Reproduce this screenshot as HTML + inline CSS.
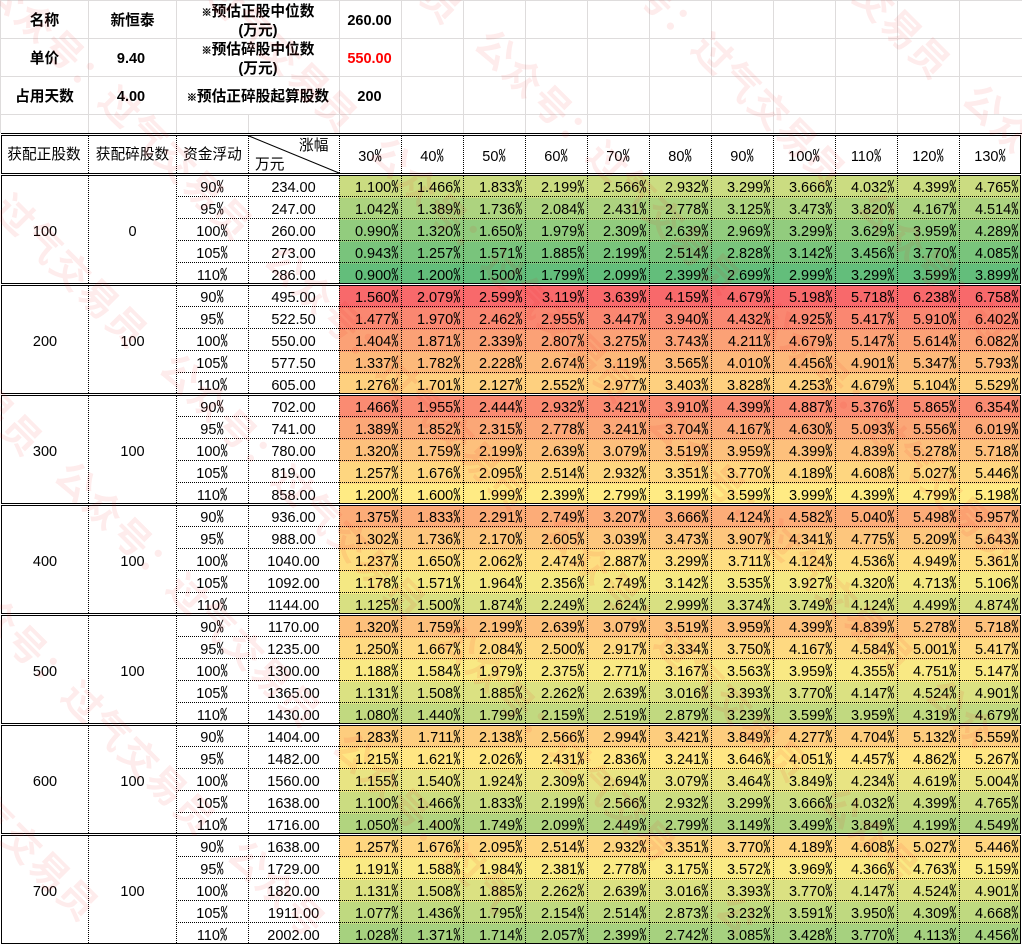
<!DOCTYPE html>
<html lang="zh"><head><meta charset="utf-8"><title>新恒泰</title>
<style>
html,body{margin:0;padding:0;background:#fff}
html{width:1022px;height:945px;overflow:hidden}
body{position:relative;width:1022px;height:945px;overflow:hidden;font:14.5px/22px "Liberation Sans","Noto Sans CJK SC",sans-serif;color:#000}
i{font-style:normal;font-family:IPAGothic,"Liberation Sans",sans-serif}
.t{position:absolute;text-align:center;white-space:nowrap}
.z{font-size:14.7px}
.w{font-weight:700;color:#000}
.k{font-size:10px;font-family:"Noto Sans CJK SC",sans-serif;font-weight:700;-webkit-text-stroke:.5px #000}
.g{position:absolute;left:2px;width:1018px;height:107px;overflow:hidden;padding:0}
.a,.b{position:absolute;top:0;height:107px;line-height:112px;text-align:center}
.a{left:0;width:86px}.b{left:87px;width:87px}
.r{position:relative;left:174px;width:844px;height:22px;display:flex;line-height:22px}
.r span{display:block;flex:none;text-align:center;white-space:nowrap}
.r span:nth-child(1){width:72px}
.r span:nth-child(2){width:91px;padding-top:1px;height:21px}
.r span:nth-child(n+3){width:59.5px;padding-right:2.5px;text-align:right;background:var(--c)}
svg{position:absolute;left:0;top:0}
.wm text{font:700 38px "Noto Sans CJK SC",sans-serif;letter-spacing:1.6px;fill:rgba(240,30,30,.085)}
</style></head><body>

<div class="t z w" style="left:1px;top:10px;width:87px">名称</div>
<div class="t z w" style="left:89px;top:10px;width:87px">新恒泰</div>
<div class="t z w" style="left:177px;top:1px;width:162px"><span class="k">※</span>预估正股中位数</div>
<div class="t z w" style="left:177px;top:20px;width:162px">(万元)</div>
<div class="t w" style="left:339px;top:10px;width:61px">260.00</div>
<div class="t z w" style="left:1px;top:48px;width:87px">单价</div>
<div class="t w" style="left:89px;top:48px;width:84px">9.40</div>
<div class="t z w" style="left:177px;top:39px;width:162px"><span class="k">※</span>预估碎股中位数</div>
<div class="t z w" style="left:177px;top:58px;width:162px">(万元)</div>
<div class="t w" style="left:339px;top:48px;width:61px;color:#f00">550.00</div>
<div class="t z w" style="left:1px;top:86px;width:87px">占用天数</div>
<div class="t w" style="left:89px;top:86px;width:84px">4.00</div>
<div class="t z w" style="left:177px;top:86px;width:162px"><span class="k">※</span>预估正碎股起算股数</div>
<div class="t w" style="left:339px;top:86px;width:61px">200</div>

<div class="t z" style="left:1px;top:144px;width:86px">获配正股数</div>
<div class="t z" style="left:89px;top:144px;width:87px">获配碎股数</div>
<div class="t z" style="left:177px;top:144px;width:71px">资金浮动</div>
<div class="t z" style="left:299px;top:135px">涨幅</div>
<div class="t z" style="left:255px;top:154px">万元</div>
<div class="t" style="left:339px;top:145px;width:62px">30<i>%</i></div>
<div class="t" style="left:401px;top:145px;width:62px">40<i>%</i></div>
<div class="t" style="left:463px;top:145px;width:62px">50<i>%</i></div>
<div class="t" style="left:525px;top:145px;width:62px">60<i>%</i></div>
<div class="t" style="left:587px;top:145px;width:62px">70<i>%</i></div>
<div class="t" style="left:649px;top:145px;width:62px">80<i>%</i></div>
<div class="t" style="left:711px;top:145px;width:62px">90<i>%</i></div>
<div class="t" style="left:773px;top:145px;width:62px">100<i>%</i></div>
<div class="t" style="left:835px;top:145px;width:62px">110<i>%</i></div>
<div class="t" style="left:897px;top:145px;width:62px">120<i>%</i></div>
<div class="t" style="left:959px;top:145px;width:62px">130<i>%</i></div>

<div class="g" style="top:176px"><div class="a">100</div><div class="b">0</div>
<div class="r" style="--c:#cbdc81"><span>90<i>%</i></span><span>234.00</span><span>1.100<i>%</i></span><span>1.466<i>%</i></span><span>1.833<i>%</i></span><span>2.199<i>%</i></span><span>2.566<i>%</i></span><span>2.932<i>%</i></span><span>3.299<i>%</i></span><span>3.666<i>%</i></span><span>4.032<i>%</i></span><span>4.399<i>%</i></span><span>4.765<i>%</i></span></div>
<div class="r" style="--c:#add37f"><span>95<i>%</i></span><span>247.00</span><span>1.042<i>%</i></span><span>1.389<i>%</i></span><span>1.736<i>%</i></span><span>2.084<i>%</i></span><span>2.431<i>%</i></span><span>2.778<i>%</i></span><span>3.125<i>%</i></span><span>3.473<i>%</i></span><span>3.820<i>%</i></span><span>4.167<i>%</i></span><span>4.514<i>%</i></span></div>
<div class="r" style="--c:#92cc7e"><span>100<i>%</i></span><span>260.00</span><span>0.990<i>%</i></span><span>1.320<i>%</i></span><span>1.650<i>%</i></span><span>1.979<i>%</i></span><span>2.309<i>%</i></span><span>2.639<i>%</i></span><span>2.969<i>%</i></span><span>3.299<i>%</i></span><span>3.629<i>%</i></span><span>3.959<i>%</i></span><span>4.289<i>%</i></span></div>
<div class="r" style="--c:#79c47c"><span>105<i>%</i></span><span>273.00</span><span>0.943<i>%</i></span><span>1.257<i>%</i></span><span>1.571<i>%</i></span><span>1.885<i>%</i></span><span>2.199<i>%</i></span><span>2.514<i>%</i></span><span>2.828<i>%</i></span><span>3.142<i>%</i></span><span>3.456<i>%</i></span><span>3.770<i>%</i></span><span>4.085<i>%</i></span></div>
<div class="r" style="--c:#63be7b"><span>110<i>%</i></span><span>286.00</span><span>0.900<i>%</i></span><span>1.200<i>%</i></span><span>1.500<i>%</i></span><span>1.799<i>%</i></span><span>2.099<i>%</i></span><span>2.399<i>%</i></span><span>2.699<i>%</i></span><span>2.999<i>%</i></span><span>3.299<i>%</i></span><span>3.599<i>%</i></span><span>3.899<i>%</i></span></div>
</div>

<div class="g" style="top:286px"><div class="a">200</div><div class="b">100</div>
<div class="r" style="--c:#f8696b"><span>90<i>%</i></span><span>495.00</span><span>1.560<i>%</i></span><span>2.079<i>%</i></span><span>2.599<i>%</i></span><span>3.119<i>%</i></span><span>3.639<i>%</i></span><span>4.159<i>%</i></span><span>4.679<i>%</i></span><span>5.198<i>%</i></span><span>5.718<i>%</i></span><span>6.238<i>%</i></span><span>6.758<i>%</i></span></div>
<div class="r" style="--c:#fa8771"><span>95<i>%</i></span><span>522.50</span><span>1.477<i>%</i></span><span>1.970<i>%</i></span><span>2.462<i>%</i></span><span>2.955<i>%</i></span><span>3.447<i>%</i></span><span>3.940<i>%</i></span><span>4.432<i>%</i></span><span>4.925<i>%</i></span><span>5.417<i>%</i></span><span>5.910<i>%</i></span><span>6.402<i>%</i></span></div>
<div class="r" style="--c:#fba176"><span>100<i>%</i></span><span>550.00</span><span>1.404<i>%</i></span><span>1.871<i>%</i></span><span>2.339<i>%</i></span><span>2.807<i>%</i></span><span>3.275<i>%</i></span><span>3.743<i>%</i></span><span>4.211<i>%</i></span><span>4.679<i>%</i></span><span>5.147<i>%</i></span><span>5.614<i>%</i></span><span>6.082<i>%</i></span></div>
<div class="r" style="--c:#fcb97a"><span>105<i>%</i></span><span>577.50</span><span>1.337<i>%</i></span><span>1.782<i>%</i></span><span>2.228<i>%</i></span><span>2.674<i>%</i></span><span>3.119<i>%</i></span><span>3.565<i>%</i></span><span>4.010<i>%</i></span><span>4.456<i>%</i></span><span>4.901<i>%</i></span><span>5.347<i>%</i></span><span>5.793<i>%</i></span></div>
<div class="r" style="--c:#fed07f"><span>110<i>%</i></span><span>605.00</span><span>1.276<i>%</i></span><span>1.701<i>%</i></span><span>2.127<i>%</i></span><span>2.552<i>%</i></span><span>2.977<i>%</i></span><span>3.403<i>%</i></span><span>3.828<i>%</i></span><span>4.253<i>%</i></span><span>4.679<i>%</i></span><span>5.104<i>%</i></span><span>5.529<i>%</i></span></div>
</div>

<div class="g" style="top:396px"><div class="a">300</div><div class="b">100</div>
<div class="r" style="--c:#fa8b72"><span>90<i>%</i></span><span>702.00</span><span>1.466<i>%</i></span><span>1.955<i>%</i></span><span>2.444<i>%</i></span><span>2.932<i>%</i></span><span>3.421<i>%</i></span><span>3.910<i>%</i></span><span>4.399<i>%</i></span><span>4.887<i>%</i></span><span>5.376<i>%</i></span><span>5.865<i>%</i></span><span>6.354<i>%</i></span></div>
<div class="r" style="--c:#fba777"><span>95<i>%</i></span><span>741.00</span><span>1.389<i>%</i></span><span>1.852<i>%</i></span><span>2.315<i>%</i></span><span>2.778<i>%</i></span><span>3.241<i>%</i></span><span>3.704<i>%</i></span><span>4.167<i>%</i></span><span>4.630<i>%</i></span><span>5.093<i>%</i></span><span>5.556<i>%</i></span><span>6.019<i>%</i></span></div>
<div class="r" style="--c:#fdc07c"><span>100<i>%</i></span><span>780.00</span><span>1.320<i>%</i></span><span>1.759<i>%</i></span><span>2.199<i>%</i></span><span>2.639<i>%</i></span><span>3.079<i>%</i></span><span>3.519<i>%</i></span><span>3.959<i>%</i></span><span>4.399<i>%</i></span><span>4.839<i>%</i></span><span>5.278<i>%</i></span><span>5.718<i>%</i></span></div>
<div class="r" style="--c:#fed680"><span>105<i>%</i></span><span>819.00</span><span>1.257<i>%</i></span><span>1.676<i>%</i></span><span>2.095<i>%</i></span><span>2.514<i>%</i></span><span>2.932<i>%</i></span><span>3.351<i>%</i></span><span>3.770<i>%</i></span><span>4.189<i>%</i></span><span>4.608<i>%</i></span><span>5.027<i>%</i></span><span>5.446<i>%</i></span></div>
<div class="r" style="--c:#ffeb84"><span>110<i>%</i></span><span>858.00</span><span>1.200<i>%</i></span><span>1.600<i>%</i></span><span>1.999<i>%</i></span><span>2.399<i>%</i></span><span>2.799<i>%</i></span><span>3.199<i>%</i></span><span>3.599<i>%</i></span><span>3.999<i>%</i></span><span>4.399<i>%</i></span><span>4.799<i>%</i></span><span>5.198<i>%</i></span></div>
</div>

<div class="g" style="top:506px"><div class="a">400</div><div class="b">100</div>
<div class="r" style="--c:#fcac78"><span>90<i>%</i></span><span>936.00</span><span>1.375<i>%</i></span><span>1.833<i>%</i></span><span>2.291<i>%</i></span><span>2.749<i>%</i></span><span>3.207<i>%</i></span><span>3.666<i>%</i></span><span>4.124<i>%</i></span><span>4.582<i>%</i></span><span>5.040<i>%</i></span><span>5.498<i>%</i></span><span>5.957<i>%</i></span></div>
<div class="r" style="--c:#fdc67d"><span>95<i>%</i></span><span>988.00</span><span>1.302<i>%</i></span><span>1.736<i>%</i></span><span>2.170<i>%</i></span><span>2.605<i>%</i></span><span>3.039<i>%</i></span><span>3.473<i>%</i></span><span>3.907<i>%</i></span><span>4.341<i>%</i></span><span>4.775<i>%</i></span><span>5.209<i>%</i></span><span>5.643<i>%</i></span></div>
<div class="r" style="--c:#fede81"><span>100<i>%</i></span><span>1040.00</span><span>1.237<i>%</i></span><span>1.650<i>%</i></span><span>2.062<i>%</i></span><span>2.474<i>%</i></span><span>2.887<i>%</i></span><span>3.299<i>%</i></span><span>3.711<i>%</i></span><span>4.124<i>%</i></span><span>4.536<i>%</i></span><span>4.949<i>%</i></span><span>5.361<i>%</i></span></div>
<div class="r" style="--c:#f4e883"><span>105<i>%</i></span><span>1092.00</span><span>1.178<i>%</i></span><span>1.571<i>%</i></span><span>1.964<i>%</i></span><span>2.356<i>%</i></span><span>2.749<i>%</i></span><span>3.142<i>%</i></span><span>3.535<i>%</i></span><span>3.927<i>%</i></span><span>4.320<i>%</i></span><span>4.713<i>%</i></span><span>5.106<i>%</i></span></div>
<div class="r" style="--c:#d8e082"><span>110<i>%</i></span><span>1144.00</span><span>1.125<i>%</i></span><span>1.500<i>%</i></span><span>1.874<i>%</i></span><span>2.249<i>%</i></span><span>2.624<i>%</i></span><span>2.999<i>%</i></span><span>3.374<i>%</i></span><span>3.749<i>%</i></span><span>4.124<i>%</i></span><span>4.499<i>%</i></span><span>4.874<i>%</i></span></div>
</div>

<div class="g" style="top:616px"><div class="a">500</div><div class="b">100</div>
<div class="r" style="--c:#fdc07c"><span>90<i>%</i></span><span>1170.00</span><span>1.320<i>%</i></span><span>1.759<i>%</i></span><span>2.199<i>%</i></span><span>2.639<i>%</i></span><span>3.079<i>%</i></span><span>3.519<i>%</i></span><span>3.959<i>%</i></span><span>4.399<i>%</i></span><span>4.839<i>%</i></span><span>5.278<i>%</i></span><span>5.718<i>%</i></span></div>
<div class="r" style="--c:#fed981"><span>95<i>%</i></span><span>1235.00</span><span>1.250<i>%</i></span><span>1.667<i>%</i></span><span>2.084<i>%</i></span><span>2.500<i>%</i></span><span>2.917<i>%</i></span><span>3.334<i>%</i></span><span>3.750<i>%</i></span><span>4.167<i>%</i></span><span>4.584<i>%</i></span><span>5.001<i>%</i></span><span>5.417<i>%</i></span></div>
<div class="r" style="--c:#f9e984"><span>100<i>%</i></span><span>1300.00</span><span>1.188<i>%</i></span><span>1.584<i>%</i></span><span>1.979<i>%</i></span><span>2.375<i>%</i></span><span>2.771<i>%</i></span><span>3.167<i>%</i></span><span>3.563<i>%</i></span><span>3.959<i>%</i></span><span>4.355<i>%</i></span><span>4.751<i>%</i></span><span>5.147<i>%</i></span></div>
<div class="r" style="--c:#dbe182"><span>105<i>%</i></span><span>1365.00</span><span>1.131<i>%</i></span><span>1.508<i>%</i></span><span>1.885<i>%</i></span><span>2.262<i>%</i></span><span>2.639<i>%</i></span><span>3.016<i>%</i></span><span>3.393<i>%</i></span><span>3.770<i>%</i></span><span>4.147<i>%</i></span><span>4.524<i>%</i></span><span>4.901<i>%</i></span></div>
<div class="r" style="--c:#c1d980"><span>110<i>%</i></span><span>1430.00</span><span>1.080<i>%</i></span><span>1.440<i>%</i></span><span>1.799<i>%</i></span><span>2.159<i>%</i></span><span>2.519<i>%</i></span><span>2.879<i>%</i></span><span>3.239<i>%</i></span><span>3.599<i>%</i></span><span>3.959<i>%</i></span><span>4.319<i>%</i></span><span>4.679<i>%</i></span></div>
</div>

<div class="g" style="top:726px"><div class="a">600</div><div class="b">100</div>
<div class="r" style="--c:#fdcd7e"><span>90<i>%</i></span><span>1404.00</span><span>1.283<i>%</i></span><span>1.711<i>%</i></span><span>2.138<i>%</i></span><span>2.566<i>%</i></span><span>2.994<i>%</i></span><span>3.421<i>%</i></span><span>3.849<i>%</i></span><span>4.277<i>%</i></span><span>4.704<i>%</i></span><span>5.132<i>%</i></span><span>5.559<i>%</i></span></div>
<div class="r" style="--c:#ffe683"><span>95<i>%</i></span><span>1482.00</span><span>1.215<i>%</i></span><span>1.621<i>%</i></span><span>2.026<i>%</i></span><span>2.431<i>%</i></span><span>2.836<i>%</i></span><span>3.241<i>%</i></span><span>3.646<i>%</i></span><span>4.051<i>%</i></span><span>4.457<i>%</i></span><span>4.862<i>%</i></span><span>5.267<i>%</i></span></div>
<div class="r" style="--c:#e8e483"><span>100<i>%</i></span><span>1560.00</span><span>1.155<i>%</i></span><span>1.540<i>%</i></span><span>1.924<i>%</i></span><span>2.309<i>%</i></span><span>2.694<i>%</i></span><span>3.079<i>%</i></span><span>3.464<i>%</i></span><span>3.849<i>%</i></span><span>4.234<i>%</i></span><span>4.619<i>%</i></span><span>5.004<i>%</i></span></div>
<div class="r" style="--c:#cbdc81"><span>105<i>%</i></span><span>1638.00</span><span>1.100<i>%</i></span><span>1.466<i>%</i></span><span>1.833<i>%</i></span><span>2.199<i>%</i></span><span>2.566<i>%</i></span><span>2.932<i>%</i></span><span>3.299<i>%</i></span><span>3.666<i>%</i></span><span>4.032<i>%</i></span><span>4.399<i>%</i></span><span>4.765<i>%</i></span></div>
<div class="r" style="--c:#b1d47f"><span>110<i>%</i></span><span>1716.00</span><span>1.050<i>%</i></span><span>1.400<i>%</i></span><span>1.749<i>%</i></span><span>2.099<i>%</i></span><span>2.449<i>%</i></span><span>2.799<i>%</i></span><span>3.149<i>%</i></span><span>3.499<i>%</i></span><span>3.849<i>%</i></span><span>4.199<i>%</i></span><span>4.549<i>%</i></span></div>
</div>

<div class="g" style="top:836px"><div class="a">700</div><div class="b">100</div>
<div class="r" style="--c:#fed680"><span>90<i>%</i></span><span>1638.00</span><span>1.257<i>%</i></span><span>1.676<i>%</i></span><span>2.095<i>%</i></span><span>2.514<i>%</i></span><span>2.932<i>%</i></span><span>3.351<i>%</i></span><span>3.770<i>%</i></span><span>4.189<i>%</i></span><span>4.608<i>%</i></span><span>5.027<i>%</i></span><span>5.446<i>%</i></span></div>
<div class="r" style="--c:#faea84"><span>95<i>%</i></span><span>1729.00</span><span>1.191<i>%</i></span><span>1.588<i>%</i></span><span>1.984<i>%</i></span><span>2.381<i>%</i></span><span>2.778<i>%</i></span><span>3.175<i>%</i></span><span>3.572<i>%</i></span><span>3.969<i>%</i></span><span>4.366<i>%</i></span><span>4.763<i>%</i></span><span>5.159<i>%</i></span></div>
<div class="r" style="--c:#dbe182"><span>100<i>%</i></span><span>1820.00</span><span>1.131<i>%</i></span><span>1.508<i>%</i></span><span>1.885<i>%</i></span><span>2.262<i>%</i></span><span>2.639<i>%</i></span><span>3.016<i>%</i></span><span>3.393<i>%</i></span><span>3.770<i>%</i></span><span>4.147<i>%</i></span><span>4.524<i>%</i></span><span>4.901<i>%</i></span></div>
<div class="r" style="--c:#bfd980"><span>105<i>%</i></span><span>1911.00</span><span>1.077<i>%</i></span><span>1.436<i>%</i></span><span>1.795<i>%</i></span><span>2.154<i>%</i></span><span>2.514<i>%</i></span><span>2.873<i>%</i></span><span>3.232<i>%</i></span><span>3.591<i>%</i></span><span>3.950<i>%</i></span><span>4.309<i>%</i></span><span>4.668<i>%</i></span></div>
<div class="r" style="--c:#a6d17f"><span>110<i>%</i></span><span>2002.00</span><span>1.028<i>%</i></span><span>1.371<i>%</i></span><span>1.714<i>%</i></span><span>2.057<i>%</i></span><span>2.399<i>%</i></span><span>2.742<i>%</i></span><span>3.085<i>%</i></span><span>3.428<i>%</i></span><span>3.770<i>%</i></span><span>4.113<i>%</i></span><span>4.456<i>%</i></span></div>
</div>

<svg width="1022" height="945" viewBox="0 0 1022 945" fill="none">
<g shape-rendering="crispEdges">
<path stroke="#dedcdc" d="M0 .5H1022M0 38.5H1022M0 76.5H1022M0 114.5H1022M.5 0V133M88.5 0V133M176.5 0V133M248.5 114V133M339.5 0V133M401.5 0V133M463.5 0V133M525.5 0V133M587.5 0V133M649.5 0V133M711.5 0V133M773.5 0V133M835.5 0V133M897.5 0V133M959.5 0V133"/>
<path stroke="#000" stroke-dasharray="1 1" d="M88.5 136V943M176.5 136V943M248.5 136V943M339.5 136V943M401.5 136V943M463.5 136V943M525.5 136V943M587.5 136V943M649.5 136V943M711.5 136V943M773.5 136V943M835.5 136V943M897.5 136V943M959.5 136V943"/>
<path stroke="#000" stroke-dasharray="1 1" d="M176 196.5H1020M176 218.5H1020M176 240.5H1020M176 262.5H1020M176 306.5H1020M176 328.5H1020M176 350.5H1020M176 372.5H1020M176 416.5H1020M176 438.5H1020M176 460.5H1020M176 482.5H1020M176 526.5H1020M176 548.5H1020M176 570.5H1020M176 592.5H1020M176 636.5H1020M176 658.5H1020M176 680.5H1020M176 702.5H1020M176 746.5H1020M176 768.5H1020M176 790.5H1020M176 812.5H1020M176 856.5H1020M176 878.5H1020M176 900.5H1020M176 922.5H1020"/>
<path stroke="#fff" d="M0 134.5H1022M0 174.5H1022M0 284.5H1022M0 394.5H1022M0 504.5H1022M0 614.5H1022M0 724.5H1022M0 834.5H1022M0 944.5H1022"/>
<path stroke="#000" d="M1 133.5H1022"/>
<rect x="1.5" y="135.5" width="1019" height="38" stroke="#000"/>
<rect x="1.5" y="175.5" width="1019" height="108" stroke="#000"/>
<rect x="1.5" y="285.5" width="1019" height="108" stroke="#000"/>
<rect x="1.5" y="395.5" width="1019" height="108" stroke="#000"/>
<rect x="1.5" y="505.5" width="1019" height="108" stroke="#000"/>
<rect x="1.5" y="615.5" width="1019" height="108" stroke="#000"/>
<rect x="1.5" y="725.5" width="1019" height="108" stroke="#000"/>
<rect x="1.5" y="835.5" width="1019" height="108" stroke="#000"/>
</g>
<path stroke="#000" d="M249 136L339 173"/>
</svg>

<svg class="wm" width="1022" height="945" viewBox="0 0 1022 945">
<text x="-19" y="13" transform="translate(217 -221) rotate(45)">公众号：过气交易员</text>
<text x="-19" y="13" transform="translate(112 -113) rotate(45)">公众号：过气交易员</text>
<text x="-19" y="13" transform="translate(7 -5) rotate(45)">公众号：过气交易员</text>
<text x="-19" y="13" transform="translate(-98 103) rotate(45)">公众号：过气交易员</text>
<text x="-19" y="13" transform="translate(-203 211) rotate(45)">公众号：过气交易员</text>
<text x="-19" y="13" transform="translate(705 -166) rotate(45)">公众号：过气交易员</text>
<text x="-19" y="13" transform="translate(600 -58) rotate(45)">公众号：过气交易员</text>
<text x="-19" y="13" transform="translate(495 50) rotate(45)">公众号：过气交易员</text>
<text x="-19" y="13" transform="translate(390 158) rotate(45)">公众号：过气交易员</text>
<text x="-19" y="13" transform="translate(285 266) rotate(45)">公众号：过气交易员</text>
<text x="-19" y="13" transform="translate(180 374) rotate(45)">公众号：过气交易员</text>
<text x="-19" y="13" transform="translate(75 482) rotate(45)">公众号：过气交易员</text>
<text x="-19" y="13" transform="translate(-30 590) rotate(45)">公众号：过气交易员</text>
<text x="-19" y="13" transform="translate(-147 676) rotate(45)">公众号：过气交易员</text>
<text x="-19" y="13" transform="translate(983 105) rotate(45)">公众</text>
<text x="-19" y="13" transform="translate(878 213) rotate(45)">公众号：过</text>
<text x="-19" y="13" transform="translate(773 321) rotate(45)">公众号：过气交易员</text>
<text x="-19" y="13" transform="translate(668 429) rotate(45)">公众号：过气交易员</text>
<text x="-19" y="13" transform="translate(563 537) rotate(45)">公众号：过气交易员</text>
<text x="-19" y="13" transform="translate(458 645) rotate(45)">公众号：过气交易</text>
<text x="-19" y="13" transform="translate(353 753) rotate(45)">公众号：过气</text>
<text x="-19" y="13" transform="translate(248 861) rotate(45)">公众号</text>
<text x="-19" y="13" transform="translate(946 700) rotate(45)">公众</text>
<text x="-19" y="13" transform="translate(841 808) rotate(45)">公众号</text>
<text x="-19" y="13" transform="translate(736 916) rotate(45)">公</text>
</svg>
</body></html>
